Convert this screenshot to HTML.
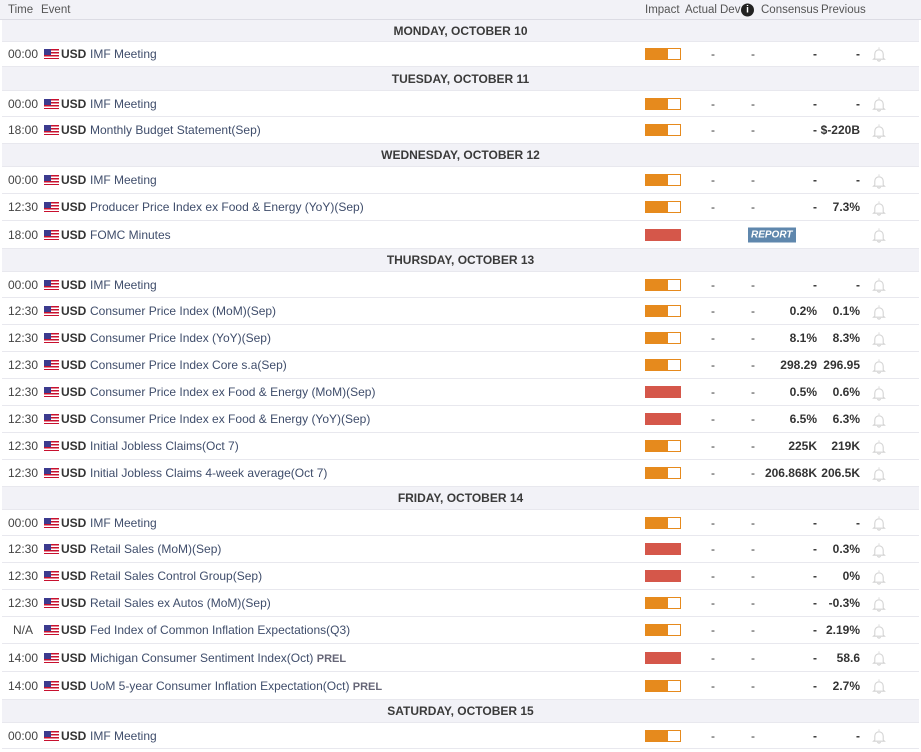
<!DOCTYPE html><html><head><meta charset="utf-8"><style>
*{margin:0;padding:0;box-sizing:border-box}
body{width:921px;height:752px;background:#fff;font-family:"Liberation Sans",sans-serif;font-size:12px;color:#333;position:relative;overflow:hidden}
.r{position:absolute;left:2px;width:917px;border-bottom:1px solid #e8e8ee;background:#fff}
.h{background:#f2f2f7;text-align:center;font-weight:bold;color:#3a3a3a;font-size:12px}
.th{position:absolute;left:0;top:0;width:921px;height:20px;background:#f2f2f7;border-bottom:1px solid #dcdce4;color:#555;font-size:11.5px}
.r span,.th span{position:absolute;top:50%;transform:translateY(-50%);white-space:nowrap}
.t{left:6px;color:#444}
.f{left:42px;width:15px;height:10px;background:repeating-linear-gradient(#c8102e 0 1.5px,#fff 1.5px 3px)}
.f::before{content:"";position:absolute;left:0;top:0;width:7px;height:6px;background:#3c3b8e}
.u{left:59px;font-weight:bold;color:#333}
.e{left:88px;color:#3f4d6b}
.e b{color:#667;font-size:11px}
.i{left:643px;width:36px;height:12px;border:1px solid #e68a1d;background:linear-gradient(90deg,#e68a1d 22px,#fff 22px)}
.i.hi{background:#d5574a;border-color:#d5574a}
.a{left:709px}.d{left:749px}
.c{right:102px;font-weight:bold}.p{right:59px;font-weight:bold}
.b{left:869px;width:16px;height:16px}
.rep{left:746px;background:#5f87ad;color:#fff;font-style:italic;font-weight:bold;font-size:10px;padding:2px 3px}
</style></head><body>
<div class="th"><span style="left:8px">Time</span><span style="left:41px">Event</span><span style="left:645px">Impact</span><span style="left:685px">Actual</span><span style="left:720px">Dev</span><span style="left:741px;width:13px;height:13px;border-radius:50%;background:#222;color:#fff;font-size:10px;font-weight:bold;text-align:center;line-height:13px">i</span><span style="left:761px">Consensus</span><span style="left:821px">Previous</span></div>
<svg width="0" height="0" style="position:absolute"><defs><symbol id="bell" viewBox="0 0 16 16"><path d="M8 1.5v1.3M3.8 12V8a4.2 4.2 0 0 1 8.4 0v4l1.3 1.2h-11z M6.5 14a1.6 1.6 0 0 0 3 0" fill="none" stroke="#d4d4d4" stroke-width="1.1"/></symbol></defs></svg>

<div class="r h" style="top:20px;height:22px"><span style="left:0;right:0">MONDAY, OCTOBER 10</span></div>
<div class="r" style="top:42px;height:25px"><span class="t">00:00</span><span class="f"></span><span class="u">USD</span><span class="e">IMF Meeting</span><span class="i"></span><span class="a">-</span><span class="d">-</span><span class="c">-</span><span class="p">-</span><svg class="b" style="position:absolute;top:4px"><use href="#bell"/></svg></div>

<div class="r h" style="top:67px;height:24px"><span style="left:0;right:0">TUESDAY, OCTOBER 11</span></div>
<div class="r" style="top:91px;height:26px"><span class="t">00:00</span><span class="f"></span><span class="u">USD</span><span class="e">IMF Meeting</span><span class="i"></span><span class="a">-</span><span class="d">-</span><span class="c">-</span><span class="p">-</span><svg class="b" style="position:absolute;top:5px"><use href="#bell"/></svg></div>
<div class="r" style="top:117px;height:27px"><span class="t">18:00</span><span class="f"></span><span class="u">USD</span><span class="e">Monthly Budget Statement(Sep)</span><span class="i"></span><span class="a">-</span><span class="d">-</span><span class="c">-</span><span class="p">$-220B</span><svg class="b" style="position:absolute;top:6px"><use href="#bell"/></svg></div>

<div class="r h" style="top:144px;height:23px"><span style="left:0;right:0">WEDNESDAY, OCTOBER 12</span></div>
<div class="r" style="top:167px;height:27px"><span class="t">00:00</span><span class="f"></span><span class="u">USD</span><span class="e">IMF Meeting</span><span class="i"></span><span class="a">-</span><span class="d">-</span><span class="c">-</span><span class="p">-</span><svg class="b" style="position:absolute;top:6px"><use href="#bell"/></svg></div>
<div class="r" style="top:194px;height:27px"><span class="t">12:30</span><span class="f"></span><span class="u">USD</span><span class="e">Producer Price Index ex Food &amp; Energy (YoY)(Sep)</span><span class="i"></span><span class="a">-</span><span class="d">-</span><span class="c">-</span><span class="p">7.3%</span><svg class="b" style="position:absolute;top:6px"><use href="#bell"/></svg></div>
<div class="r" style="top:221px;height:28px"><span class="t">18:00</span><span class="f"></span><span class="u">USD</span><span class="e">FOMC Minutes</span><span class="i hi"></span><span class="rep">REPORT</span><svg class="b" style="position:absolute;top:6px"><use href="#bell"/></svg></div>

<div class="r h" style="top:249px;height:23px"><span style="left:0;right:0">THURSDAY, OCTOBER 13</span></div>
<div class="r" style="top:272px;height:26px"><span class="t">00:00</span><span class="f"></span><span class="u">USD</span><span class="e">IMF Meeting</span><span class="i"></span><span class="a">-</span><span class="d">-</span><span class="c">-</span><span class="p">-</span><svg class="b" style="position:absolute;top:5px"><use href="#bell"/></svg></div>
<div class="r" style="top:298px;height:27px"><span class="t">12:30</span><span class="f"></span><span class="u">USD</span><span class="e">Consumer Price Index (MoM)(Sep)</span><span class="i"></span><span class="a">-</span><span class="d">-</span><span class="c">0.2%</span><span class="p">0.1%</span><svg class="b" style="position:absolute;top:6px"><use href="#bell"/></svg></div>
<div class="r" style="top:325px;height:27px"><span class="t">12:30</span><span class="f"></span><span class="u">USD</span><span class="e">Consumer Price Index (YoY)(Sep)</span><span class="i"></span><span class="a">-</span><span class="d">-</span><span class="c">8.1%</span><span class="p">8.3%</span><svg class="b" style="position:absolute;top:6px"><use href="#bell"/></svg></div>
<div class="r" style="top:352px;height:27px"><span class="t">12:30</span><span class="f"></span><span class="u">USD</span><span class="e">Consumer Price Index Core s.a(Sep)</span><span class="i"></span><span class="a">-</span><span class="d">-</span><span class="c">298.29</span><span class="p">296.95</span><svg class="b" style="position:absolute;top:6px"><use href="#bell"/></svg></div>
<div class="r" style="top:379px;height:27px"><span class="t">12:30</span><span class="f"></span><span class="u">USD</span><span class="e">Consumer Price Index ex Food &amp; Energy (MoM)(Sep)</span><span class="i hi"></span><span class="a">-</span><span class="d">-</span><span class="c">0.5%</span><span class="p">0.6%</span><svg class="b" style="position:absolute;top:6px"><use href="#bell"/></svg></div>
<div class="r" style="top:406px;height:27px"><span class="t">12:30</span><span class="f"></span><span class="u">USD</span><span class="e">Consumer Price Index ex Food &amp; Energy (YoY)(Sep)</span><span class="i hi"></span><span class="a">-</span><span class="d">-</span><span class="c">6.5%</span><span class="p">6.3%</span><svg class="b" style="position:absolute;top:6px"><use href="#bell"/></svg></div>
<div class="r" style="top:433px;height:27px"><span class="t">12:30</span><span class="f"></span><span class="u">USD</span><span class="e">Initial Jobless Claims(Oct 7)</span><span class="i"></span><span class="a">-</span><span class="d">-</span><span class="c">225K</span><span class="p">219K</span><svg class="b" style="position:absolute;top:6px"><use href="#bell"/></svg></div>
<div class="r" style="top:460px;height:27px"><span class="t">12:30</span><span class="f"></span><span class="u">USD</span><span class="e">Initial Jobless Claims 4-week average(Oct 7)</span><span class="i"></span><span class="a">-</span><span class="d">-</span><span class="c">206.868K</span><span class="p">206.5K</span><svg class="b" style="position:absolute;top:6px"><use href="#bell"/></svg></div>

<div class="r h" style="top:487px;height:23px"><span style="left:0;right:0">FRIDAY, OCTOBER 14</span></div>
<div class="r" style="top:510px;height:26px"><span class="t">00:00</span><span class="f"></span><span class="u">USD</span><span class="e">IMF Meeting</span><span class="i"></span><span class="a">-</span><span class="d">-</span><span class="c">-</span><span class="p">-</span><svg class="b" style="position:absolute;top:5px"><use href="#bell"/></svg></div>
<div class="r" style="top:536px;height:27px"><span class="t">12:30</span><span class="f"></span><span class="u">USD</span><span class="e">Retail Sales (MoM)(Sep)</span><span class="i hi"></span><span class="a">-</span><span class="d">-</span><span class="c">-</span><span class="p">0.3%</span><svg class="b" style="position:absolute;top:6px"><use href="#bell"/></svg></div>
<div class="r" style="top:563px;height:27px"><span class="t">12:30</span><span class="f"></span><span class="u">USD</span><span class="e">Retail Sales Control Group(Sep)</span><span class="i hi"></span><span class="a">-</span><span class="d">-</span><span class="c">-</span><span class="p">0%</span><svg class="b" style="position:absolute;top:6px"><use href="#bell"/></svg></div>
<div class="r" style="top:590px;height:27px"><span class="t">12:30</span><span class="f"></span><span class="u">USD</span><span class="e">Retail Sales ex Autos (MoM)(Sep)</span><span class="i"></span><span class="a">-</span><span class="d">-</span><span class="c">-</span><span class="p">-0.3%</span><svg class="b" style="position:absolute;top:6px"><use href="#bell"/></svg></div>
<div class="r" style="top:617px;height:27px"><span class="t" style="left:11px">N/A</span><span class="f"></span><span class="u">USD</span><span class="e">Fed Index of Common Inflation Expectations(Q3)</span><span class="i"></span><span class="a">-</span><span class="d">-</span><span class="c">-</span><span class="p">2.19%</span><svg class="b" style="position:absolute;top:6px"><use href="#bell"/></svg></div>
<div class="r" style="top:644px;height:28px"><span class="t">14:00</span><span class="f"></span><span class="u">USD</span><span class="e">Michigan Consumer Sentiment Index(Oct) <b>PREL</b></span><span class="i hi"></span><span class="a">-</span><span class="d">-</span><span class="c">-</span><span class="p">58.6</span><svg class="b" style="position:absolute;top:6px"><use href="#bell"/></svg></div>
<div class="r" style="top:672px;height:28px"><span class="t">14:00</span><span class="f"></span><span class="u">USD</span><span class="e">UoM 5-year Consumer Inflation Expectation(Oct) <b>PREL</b></span><span class="i"></span><span class="a">-</span><span class="d">-</span><span class="c">-</span><span class="p">2.7%</span><svg class="b" style="position:absolute;top:6px"><use href="#bell"/></svg></div>

<div class="r h" style="top:700px;height:23px"><span style="left:0;right:0">SATURDAY, OCTOBER 15</span></div>
<div class="r" style="top:723px;height:26px"><span class="t">00:00</span><span class="f"></span><span class="u">USD</span><span class="e">IMF Meeting</span><span class="i"></span><span class="a">-</span><span class="d">-</span><span class="c">-</span><span class="p">-</span><svg class="b" style="position:absolute;top:5px"><use href="#bell"/></svg></div>
</body></html>
